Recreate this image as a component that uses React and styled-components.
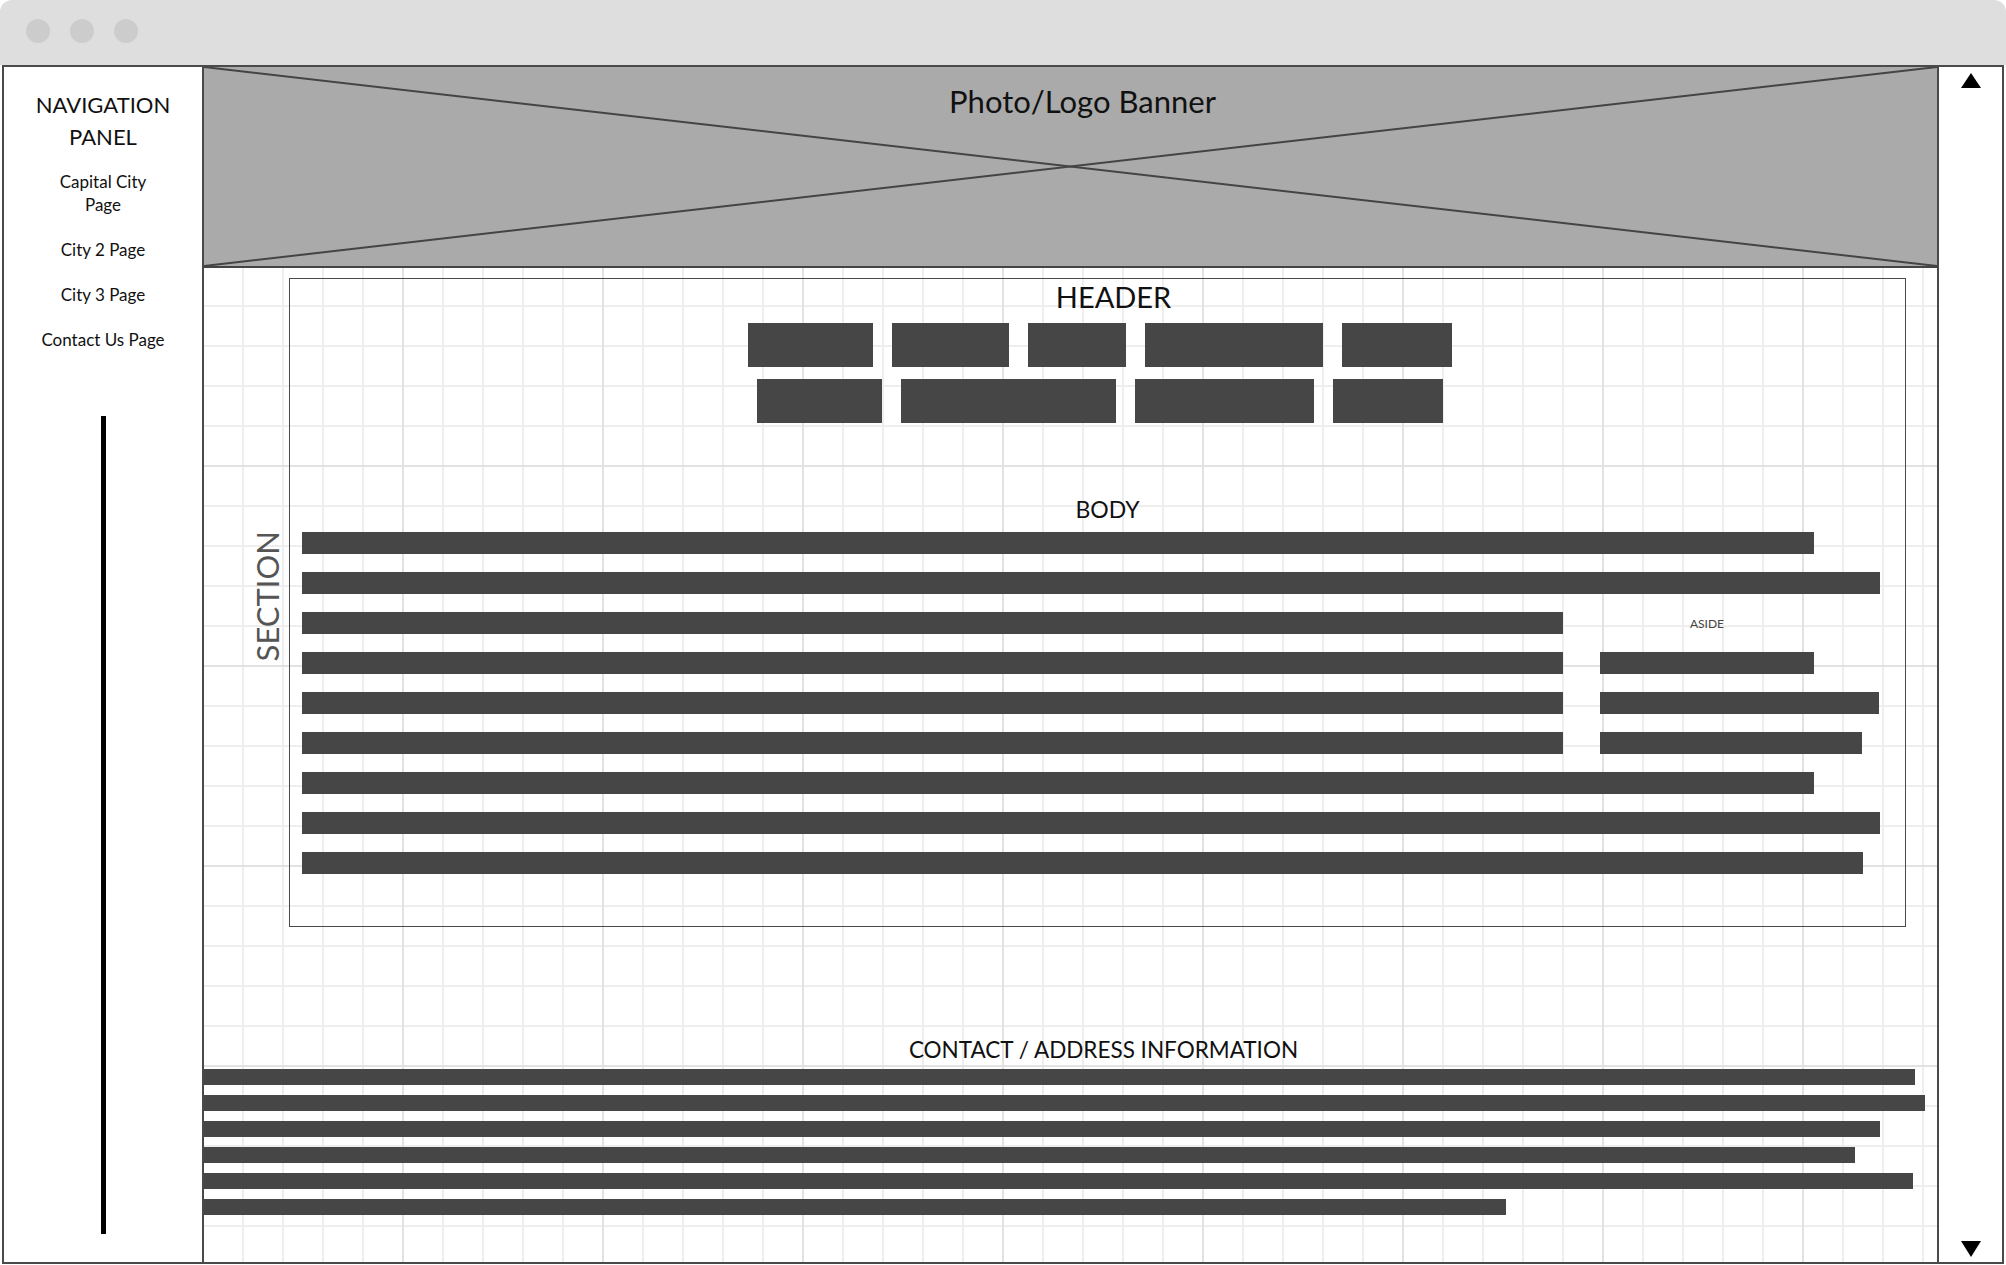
import React from "react";
import styled, { createGlobalStyle } from "styled-components";

const GlobalStyle = createGlobalStyle`
  html, body {
    margin: 0;
    padding: 0;
    background: #fff;
  }
  body {
    font-family: Lato, "Open Sans", sans-serif;
    color: #111;
  }
  * {
    box-sizing: border-box;
  }
`;

const Window = styled.div`
  width: 2006px;
  height: 1265px;
  display: flex;
  flex-direction: column;
  overflow: hidden;
`;

const TitleBar = styled.div`
  height: 65px;
  flex-shrink: 0;
  display: flex;
  align-items: center;
  gap: 20px;
  padding: 0 0 3px 26px;
  background: #dedede;
  border-radius: 12px 12px 0 0;
`;

const Dot = styled.span`
  width: 24px;
  height: 24px;
  border-radius: 50%;
  background: #cccccc;
`;

const Frame = styled.div`
  display: flex;
  width: 2002px;
  height: 1199px;
  margin-left: 2px;
  border: 2px solid #4a4a4a;
`;

const NavPanel = styled.nav`
  width: 200px;
  flex-shrink: 0;
  display: flex;
  flex-direction: column;
  align-items: center;
  padding-top: 22px;
  border-right: 2px solid #4a4a4a;
  background: #fff;
`;

const NavTitle = styled.h2`
  margin: 0;
  font-size: 22px;
  font-weight: 400;
  line-height: 32px;
  text-align: center;
`;

const NavList = styled.div`
  margin-top: 17px;
  display: flex;
  flex-direction: column;
  align-items: center;
  gap: 22px;
`;

const NavLink = styled.a`
  font-size: 17px;
  line-height: 23px;
  text-align: center;
  color: #111;
  text-decoration: none;
`;

const NavRule = styled.div`
  width: 5px;
  height: 818px;
  margin-top: 65px;
  background: #000;
`;

const Main = styled.main`
  flex: 1;
  min-width: 0;
  display: flex;
  flex-direction: column;
`;

const Banner = styled.div`
  position: relative;
  height: 201px;
  flex-shrink: 0;
  display: flex;
  justify-content: center;
  padding: 16px 0 0 24px;
  background: #aaaaaa;
  border-bottom: 2px solid #444;
`;

const BannerCross = styled.svg`
  position: absolute;
  inset: 0;
  width: 100%;
  height: 100%;
`;

const BannerTitle = styled.div`
  position: relative;
  font-size: 31px;
  line-height: 37px;
`;

const Canvas = styled.div`
  flex: 1;
  display: flex;
  flex-direction: column;
  padding-top: 10px;
  background-color: #fff;
  background-image: linear-gradient(to right, #e2e2e2 2px, transparent 2px),
    linear-gradient(to bottom, #e2e2e2 2px, transparent 2px),
    linear-gradient(to right, #eeeeee 2px, transparent 2px),
    linear-gradient(to bottom, #eeeeee 2px, transparent 2px);
  background-size: 200px 200px, 200px 200px, 40px 40px, 40px 40px;
  background-position: 198px 197px, 198px 197px, 38px 37px, 38px 37px;
`;

const SectionRow = styled.div`
  display: flex;
`;

const SideLabel = styled.div`
  width: 85px;
  flex-shrink: 0;
  display: flex;
  align-items: center;
  justify-content: flex-end;
  padding: 0 6px 12px 0;
`;

const SideText = styled.span`
  writing-mode: vertical-rl;
  transform: rotate(180deg);
  font-size: 31px;
  line-height: 31px;
  color: #555;
`;

const SectionBox = styled.section`
  width: 1617px;
  height: 649px;
  display: flex;
  flex-direction: column;
  border: 1px solid #4a4a4a;
`;

const Heading = styled.div`
  font-size: ${(p) => p.$size}px;
  line-height: ${(p) => p.$line}px;
  margin-top: ${(p) => p.$top || 0}px;
  padding-left: ${(p) => p.$shift || 0}px;
  text-align: center;
  color: #111;
`;

const BlockRows = styled.div`
  margin-top: 9px;
  padding-left: 4px;
  display: flex;
  flex-direction: column;
  align-items: center;
  gap: 12px;
`;

const BlockRow = styled.div`
  display: flex;
  gap: 19px;
`;

const Block = styled.div`
  width: ${(p) => p.$w}px;
  height: 44px;
  background: #464646;
`;

const Lines = styled.div`
  margin-top: ${(p) => p.$top}px;
  padding-left: ${(p) => p.$left || 0}px;
  display: flex;
  flex-direction: column;
  gap: ${(p) => p.$gap}px;
`;

const Bar = styled.div`
  width: ${(p) => p.$w}px;
  height: ${(p) => p.$h}px;
  background: #464646;
`;

const SplitRow = styled.div`
  display: flex;
  gap: 37px;
`;

const Column = styled.div`
  display: flex;
  flex-direction: column;
  gap: 18px;
`;

const AsideLabel = styled.div`
  width: 214px;
  height: 22px;
  font-size: 12px;
  line-height: 24px;
  text-align: center;
  color: #444;
`;

const Scrollbar = styled.div`
  width: 65px;
  flex-shrink: 0;
  display: flex;
  flex-direction: column;
  align-items: center;
  justify-content: space-between;
  padding: 6px 0 5px;
  border-left: 2px solid #4a4a4a;
  background: #fff;
`;

const Arrow = styled.span`
  width: 0;
  height: 0;
  border-left: 10px solid transparent;
  border-right: 10px solid transparent;
  ${(p) =>
    p.$down ? "border-top: 16px solid #000;" : "border-bottom: 15px solid #000;"}
`;

const navLinks = [
  ["Capital City", "Page"],
  ["City 2 Page"],
  ["City 3 Page"],
  ["Contact Us Page"],
];

const headerRows = [
  [125, 117, 98, 178, 110],
  [125, 215, 179, 110],
];

const mainSplit = [1261, 1261, 1261, 1261];
const asideBars = [214, 279, 262];
const contactBars = [1711, 1721, 1676, 1651, 1709, 1302];

export default function App() {
  return (
    <Window>
      <GlobalStyle />
      <TitleBar>
        <Dot />
        <Dot />
        <Dot />
      </TitleBar>
      <Frame>
        <NavPanel>
          <NavTitle>
            NAVIGATION
            <br />
            PANEL
          </NavTitle>
          <NavList>
            {navLinks.map((lines) => (
              <NavLink key={lines.join(" ")} href="#">
                {lines.map((l, i) => (
                  <React.Fragment key={l}>
                    {i > 0 && <br />}
                    {l}
                  </React.Fragment>
                ))}
              </NavLink>
            ))}
          </NavList>
          <NavRule />
        </NavPanel>

        <Main>
          <Banner>
            <BannerCross viewBox="0 0 100 100" preserveAspectRatio="none">
              <line x1="0" y1="0" x2="100" y2="100" stroke="#444" strokeWidth="2" vectorEffect="non-scaling-stroke" />
              <line x1="100" y1="0" x2="0" y2="100" stroke="#444" strokeWidth="2" vectorEffect="non-scaling-stroke" />
            </BannerCross>
            <BannerTitle>Photo/Logo Banner</BannerTitle>
          </Banner>

          <Canvas>
            <SectionRow>
              <SideLabel>
                <SideText>SECTION</SideText>
              </SideLabel>
              <SectionBox>
                <Heading $size={29} $line={35} $shift={32}>
                  HEADER
                </Heading>
                <BlockRows>
                  {headerRows.map((row, r) => (
                    <BlockRow key={r}>
                      {row.map((w, i) => (
                        <Block key={i} $w={w} />
                      ))}
                    </BlockRow>
                  ))}
                </BlockRows>

                <Heading $size={23} $line={28} $top={72} $shift={20}>
                  BODY
                </Heading>
                <Lines $top={9} $left={12} $gap={18}>
                  <Bar $w={1512} $h={22} />
                  <Bar $w={1578} $h={22} />
                  <SplitRow>
                    <Column>
                      {mainSplit.map((w, i) => (
                        <Bar key={i} $w={w} $h={22} />
                      ))}
                    </Column>
                    <Column>
                      <AsideLabel>ASIDE</AsideLabel>
                      {asideBars.map((w, i) => (
                        <Bar key={i} $w={w} $h={22} />
                      ))}
                    </Column>
                  </SplitRow>
                  <Bar $w={1512} $h={22} />
                  <Bar $w={1578} $h={22} />
                  <Bar $w={1561} $h={22} />
                </Lines>
              </SectionBox>
            </SectionRow>

            <Heading $size={22.5} $line={28} $top={109} $shift={66}>
              CONTACT / ADDRESS INFORMATION
            </Heading>
            <Lines $top={5} $gap={10}>
              {contactBars.map((w, i) => (
                <Bar key={i} $w={w} $h={16} />
              ))}
            </Lines>
          </Canvas>
        </Main>

        <Scrollbar>
          <Arrow />
          <Arrow $down />
        </Scrollbar>
      </Frame>
    </Window>
  );
}
